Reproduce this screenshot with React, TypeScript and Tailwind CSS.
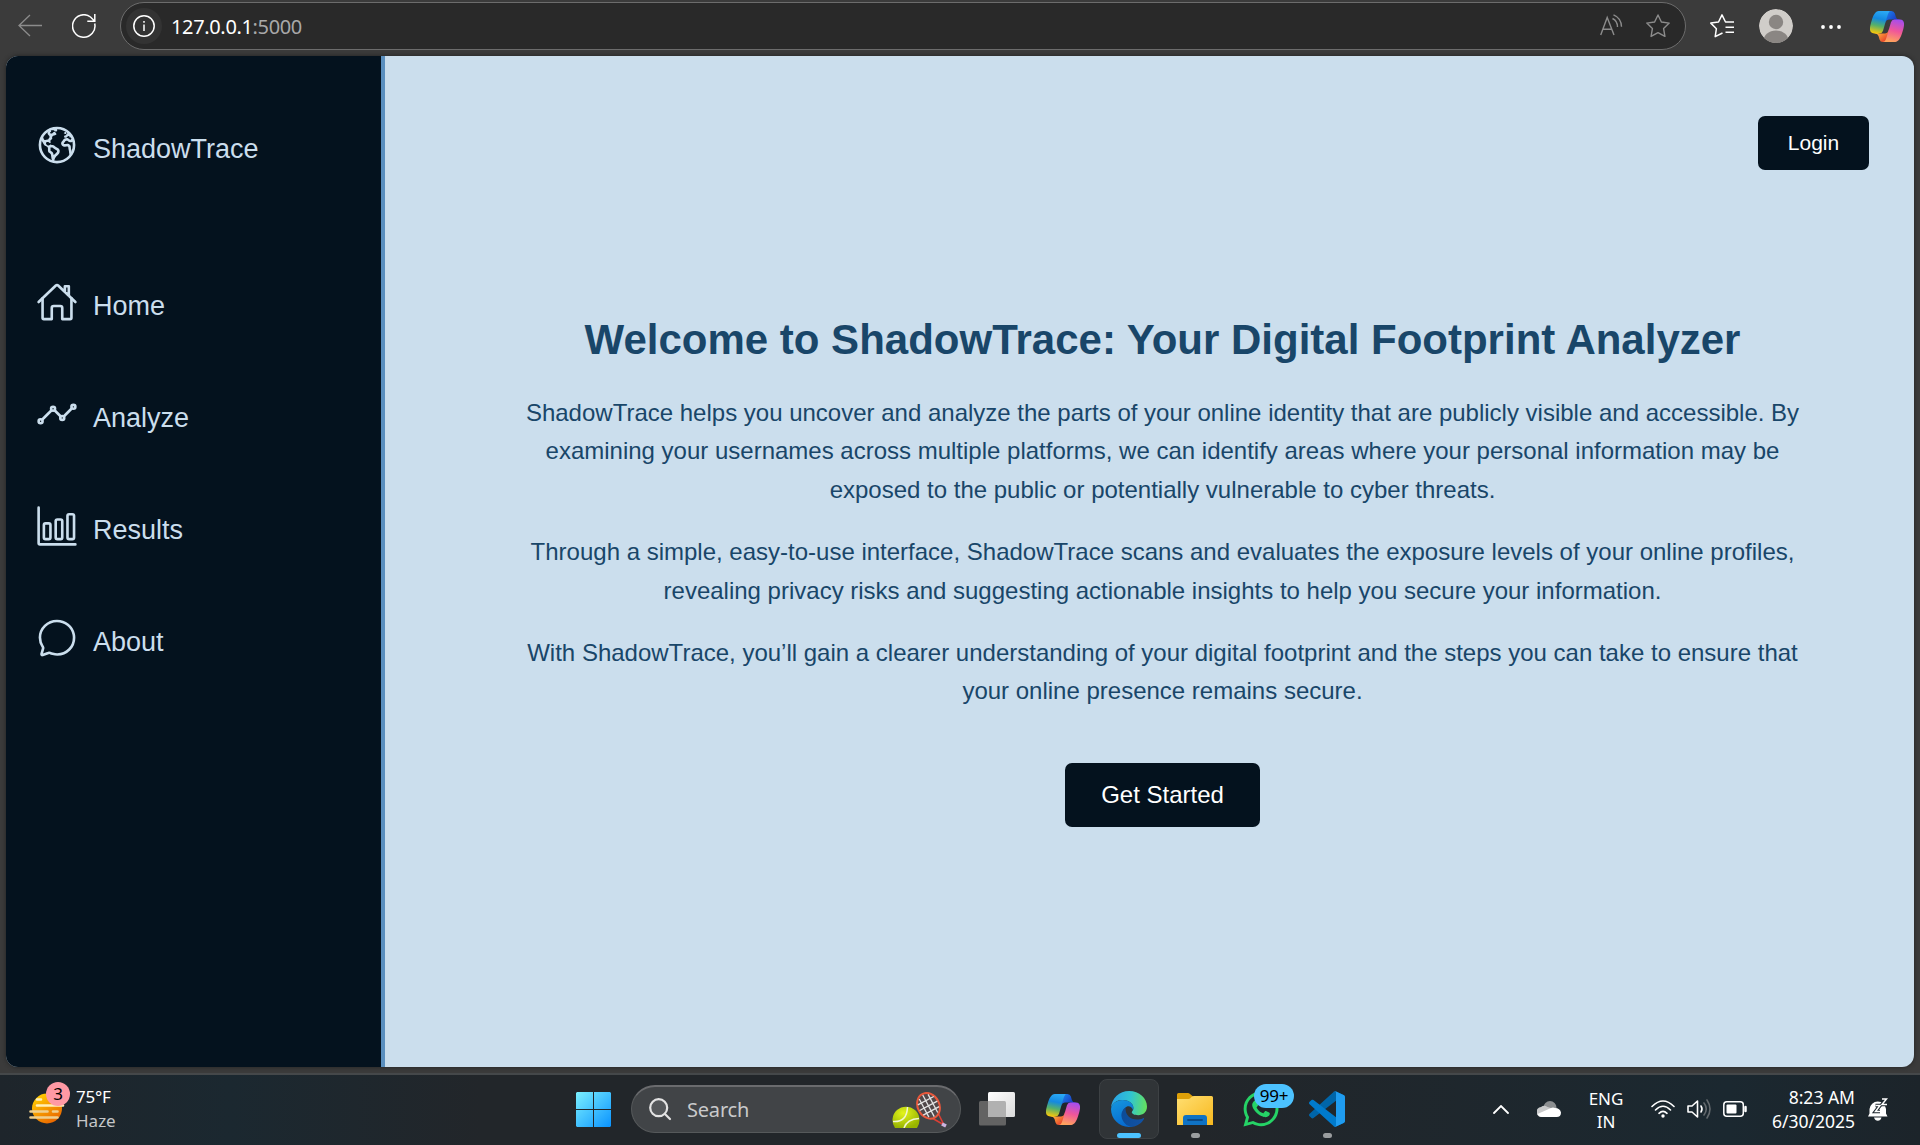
import { useId, type ReactNode } from "react";
import {
  IoEarthOutline,
  IoHomeOutline,
  IoAnalyticsOutline,
  IoBarChartOutline,
  IoChatbubbleOutline,
} from "react-icons/io5";
import { FaWhatsapp } from "react-icons/fa";

function CopilotLogo({ className }: { className: string }) {
  const id = useId();
  return (
    <svg viewBox="2.5 4 43 40" className={className} fill="none">
      <defs>
        <linearGradient id={id + "a"} x1="16" y1="4" x2="10" y2="33" gradientUnits="userSpaceOnUse">
          <stop offset="0" stopColor="#2aa8f5" />
          <stop offset=".35" stopColor="#1489e0" />
          <stop offset=".65" stopColor="#55b06a" />
          <stop offset="1" stopColor="#f8c80a" />
        </linearGradient>
        <linearGradient id={id + "b"} x1="38" y1="15" x2="30" y2="44" gradientUnits="userSpaceOnUse">
          <stop offset="0" stopColor="#a44df0" />
          <stop offset=".5" stopColor="#f0569a" />
          <stop offset="1" stopColor="#ffa45c" />
        </linearGradient>
        <linearGradient id={id + "c"} x1="24" y1="6" x2="35" y2="15" gradientUnits="userSpaceOnUse">
          <stop offset="0" stopColor="#1b7ce8" />
          <stop offset="1" stopColor="#1a3fc4" />
        </linearGradient>
        <linearGradient id={id + "d"} x1="12" y1="33" x2="21" y2="43" gradientUnits="userSpaceOnUse">
          <stop offset="0" stopColor="#ffab3c" />
          <stop offset="1" stopColor="#e8452c" />
        </linearGradient>
      </defs>
      <path d="M34.142 7.325A4.63 4.63 0 0 0 29.7 4h-1.35a4.63 4.63 0 0 0-4.554 3.794L21.48 20.407l.575-1.965a4.63 4.63 0 0 1 4.444-3.33h7.853l3.294 1.282 3.175-1.283h-.926a4.63 4.63 0 0 1-4.443-3.325z" fill={"url(#" + id + "c)"} />
      <path d="M14.33 40.656A4.63 4.63 0 0 0 18.779 44h2.87a4.63 4.63 0 0 0 4.629-4.51l.312-12.163-.654 2.233a4.63 4.63 0 0 1-4.443 3.329h-7.919l-2.823-1.532-3.057 1.532h.912a4.63 4.63 0 0 1 4.447 3.344z" fill={"url(#" + id + "d)"} />
      <path d="M29.5 4H13.46c-4.583 0-7.332 6.057-9.165 12.113C2.123 23.29-.72 32.885 7.503 32.885h6.925a4.63 4.63 0 0 0 4.456-3.358 2078 2078 0 0 1 4.971-17.156c.843-2.843 1.544-5.284 2.621-6.805C27.08 4.713 28.086 4 29.5 4" fill={"url(#" + id + "a)"} />
      <path d="M18.498 44h16.04c4.582 0 7.332-6.058 9.165-12.115 2.171-7.177 5.013-16.775-3.208-16.775h-6.926a4.63 4.63 0 0 0-4.455 3.358 2084 2084 0 0 1-4.972 17.16c-.842 2.844-1.544 5.285-2.62 6.806-.604.852-1.61 1.566-3.024 1.566" fill={"url(#" + id + "b)"} />
    </svg>
  );
}

function EdgeLogo() {
  return (
    <svg viewBox="0 0 36 36" className="size-9">
      <defs>
        <linearGradient id="edgeTop" x1="2" y1="12" x2="36" y2="16" gradientUnits="userSpaceOnUse">
          <stop offset="0" stopColor="#2aa6e6" />
          <stop offset=".5" stopColor="#31c5d0" />
          <stop offset="1" stopColor="#66e25a" />
        </linearGradient>
        <linearGradient id="edgeLeft" x1="4" y1="12" x2="16" y2="36" gradientUnits="userSpaceOnUse">
          <stop offset="0" stopColor="#1391dc" />
          <stop offset="1" stopColor="#0668cf" />
        </linearGradient>
        <linearGradient id="edgeDark" x1="12" y1="24" x2="32" y2="28" gradientUnits="userSpaceOnUse">
          <stop offset="0" stopColor="#0d4c98" />
          <stop offset="1" stopColor="#1152a4" />
        </linearGradient>
      </defs>
      <path d="M0 17C.6 7 8.5 0 18 0c10.500 0 18 7.500 18 15.500 0 5.500-4 8.700-8.800 8.700-4 0-6.400-1.400-6.400-2.900 0-1 1.600-1.500 1.600-4.300C22.400 12.500 17.500 9 11.500 9 5.500 9 1.500 12.500 0 17z" fill="url(#edgeTop)" />
      <path d="M0 18C.8 12.500 5.500 9 11.500 9c6 0 10.900 3.500 10.900 8 0 .8-.2 1.500-.4 2C21 16 18.500 14.500 16 15.500c-3 1.500-5 5-4.500 9 .6 5 4.500 9.500 10.500 11C10 38 0 29 0 18z" fill="url(#edgeLeft)" />
      <path d="M14.500 16.500c-2.500 1.700-4.500 5-4 9C11.200 31 16 36 21.500 35.700c5-.5 9.500-4 11.500-7.700.3-.8-.3-1.200-1-.8-2 1-4 1.400-6 1.400-7 0-12-5-11.500-12.100z" fill="url(#edgeDark)" />
    </svg>
  );
}

function VsCodeLogo() {
  return (
    <svg viewBox="0 0 36 36" className="size-9">
      <path d="M26.500 .3 34.500 4c1 .4 1.500 1.300 1.500 2.300L27 9.800 4.500 27c-.7.500-1.400.5-2 0L.6 25.200c-.8-.7-.8-1.800 0-2.500L24.800.8c.5-.5 1.100-.7 1.700-.5z" fill="#0065a9" />
      <path d="M26.500 35.700 34.500 32c1-.4 1.500-1.300 1.500-2.300L27 26.200 4.500 9c-.7-.5-1.400-.5-2 0L.6 10.800c-.8.700-.8 1.800 0 2.500L24.800 35.200c.5.500 1.100.7 1.700.5z" fill="#007acc" />
      <path d="M26.500 35.700c-.7.300-1.400.1-1.900-.5.900.9 2.400.3 2.400-1V1.800c0-1.300-1.500-1.900-2.400-1 .5-.6 1.200-.8 1.900-.5L34.600 4.100c.9.400 1.400 1.200 1.400 2.200v23.400c0 1-.5 1.800-1.400 2.200z" fill="#1f9cf0" />
    </svg>
  );
}

function NavItem({ icon, label }: { icon: ReactNode; label: string }) {
  return (
    <a className="flex h-28 items-center pl-[30px]">
      <span className="-mt-1.5 text-[42px]">{icon}</span>
      <span className="mt-px ml-[15px] text-[27px] leading-8">{label}</span>
    </a>
  );
}

function Toolbar() {
  return (
    <header className="flex h-14 shrink-0 items-start pt-0.5 font-['Noto_Sans',sans-serif]">
      <div className="flex h-12 w-[120px] items-center pl-[18px]">
        <svg viewBox="0 0 24 24" className="size-6" fill="none" stroke="#8c8c8c" strokeWidth="1.3">
          <path d="M24 11.500H1M12 1 1 11.500 12 22" />
        </svg>
        <svg viewBox="0 0 24 24" className="ml-[30px] size-6" fill="none" stroke="#fff" strokeWidth="1.5">
          <path d="M22.700 9.500A11.200 11.200 0 1 1 18.500 3L22.500 7M22.800 0v7.200h-7.500" />
        </svg>
      </div>
      <div className="flex h-12 w-[1566px] items-center rounded-full border border-[#6c6c6c] bg-[#292929] px-[5px]">
        <span className="grid size-9 place-items-center rounded-full bg-[#333]">
          <svg viewBox="0 0 22 22" className="size-[22px]" fill="none" stroke="#fff" strokeWidth="1.5">
            <circle cx="11" cy="11" r="10.2" />
            <path d="M11 9.500V16M11 6v1.800" />
          </svg>
        </span>
        <span className="mt-0.5 ml-[9px] text-[20px] tracking-[-0.35px] text-white">
          127.0.0.1<span className="text-[#a8a8a8]">:5000</span>
        </span>
        <svg viewBox="0 0 24 24" className="ml-auto size-6" fill="none" stroke="#8c8c8c" strokeWidth="1.4">
          <path d="M.700 21 7.200 3.500 14 21M3 15.200h8.700M12.500 4.500q5 2.500 5 8.500M13.500 .800q7.800 3.200 8 12" />
        </svg>
        <svg viewBox="0 0 24 24" className="mr-[10px] ml-[22px] size-6" fill="none" stroke="#8c8c8c" strokeWidth="1.4" strokeLinejoin="round">
          <path d="m12 1 3.400 7 7.800 1.100-5.600 5.500 1.300 7.800-6.900-3.700-6.900 3.700 1.300-7.800L.8 9.100 8.600 8z" />
        </svg>
      </div>
      <div className="flex h-12 items-center">
        <svg viewBox="0 0 24 24" className="ml-6 size-6" fill="none" stroke="#fff" strokeWidth="1.5" strokeLinejoin="round">
          <path d="M12.500 19 5.200 22.600l1.200-7.900L.8 9.100 8.500 8 12 .9 15.500 8H24M15.500 13.300H24M15.500 18.300H24" />
        </svg>
        <svg viewBox="0 0 34 34" className="ml-[25px] size-[34px]">
          <clipPath id="avatar"><circle cx="17" cy="17" r="17" /></clipPath>
          <g clipPath="url(#avatar)">
            <circle cx="17" cy="17" r="17" fill="#d0cdc9" />
            <circle cx="17" cy="13" r="7.2" fill="#8a8683" />
            <ellipse cx="17" cy="32" rx="12.5" ry="10.5" fill="#8a8683" />
          </g>
        </svg>
        <svg viewBox="0 0 20 4" className="mt-0.5 ml-7 h-1 w-5" fill="#fff">
          <circle cx="2" cy="2" r="1.9" /><circle cx="10" cy="2" r="1.9" /><circle cx="18" cy="2" r="1.9" />
        </svg>
        <CopilotLogo className="ml-[29px] h-[31px] w-[34px]" />
      </div>
    </header>
  );
}

function Taskbar() {
  return (
    <footer className="flex h-[72px] shrink-0 items-center border-t-2 border-[#45484a] bg-[linear-gradient(90deg,#1e252b_0%,#1b2830_12%,#22262a_25%,#22262a_62%,#1b2830_90%,#1c242a_100%)] pb-0.5 font-['Noto_Sans',sans-serif]">
      <div className="flex w-[576px] items-center pl-[29px]">
        <div className="relative size-9">
          <svg viewBox="0 0 36 36" className="size-9" strokeLinecap="round">
            <defs>
              <linearGradient id="sun" x1="8" y1="6" x2="26" y2="34" gradientUnits="userSpaceOnUse">
                <stop offset="0" stopColor="#ffc800" /><stop offset="1" stopColor="#e85d00" />
              </linearGradient>
            </defs>
            <circle cx="18" cy="17.5" r="15" fill="url(#sun)" />
            <path d="M8 8.500h4M8 14.500h26" stroke="#fff0b8" strokeWidth="2.6" />
            <path d="M1.500 20.500h17M24 20.500h4.500M1.500 26.500h27" stroke="#efcf8e" strokeWidth="2.6" />
          </svg>
          <span className="absolute -top-[9px] left-[17px] grid size-6 place-items-center rounded-full bg-[#ff99a4] text-[17px] leading-6 text-black">3</span>
        </div>
        <div className="-mt-px ml-[11px] text-[17px] leading-6 tracking-[-0.2px]">
          <p className="text-white">75°F</p>
          <p className="tracking-normal text-[#c4c6c8]">Haze</p>
        </div>
      </div>
      <svg viewBox="0 0 35 35" className="size-[35px]">
        <defs>
          <linearGradient id="win" x1="0" y1="0" x2="35" y2="35" gradientUnits="userSpaceOnUse">
            <stop offset="0" stopColor="#7bf0ff" /><stop offset="1" stopColor="#0a93ff" />
          </linearGradient>
        </defs>
        <path d="M1 0h16v17H0V1zM18 0h16l1 1v16H18zM0 18h17v17H1l-1-1zM18 18h17v16l-1 1H18z" fill="url(#win)" />
      </svg>
      <div className="ml-5 flex h-12 w-[330px] items-center rounded-full border border-t-2 border-[#56595b] border-t-[#6a6b6e] bg-[#414447] pl-[17px]">
        <svg viewBox="0 0 23 23" className="size-[23px]" fill="#55585b" stroke="#e3e3e3" strokeWidth="2.2" strokeLinecap="round">
          <circle cx="9.7" cy="9.7" r="8.5" /><path d="m16 16 5 5" />
        </svg>
        <span className="ml-[15px] text-[20px] tracking-[-0.2px] text-[#c9cacb]">Search</span>
        <svg viewBox="0 0 56 36" className="mr-3 ml-auto h-9 w-14">
          <defs>
            <radialGradient id="ball" cx=".4" cy=".3" r=".7">
              <stop offset="0" stopColor="#e3f41c" /><stop offset="1" stopColor="#98b400" />
            </radialGradient>
          </defs>
          <path d="M3 36A13.500 13.500 0 1 1 25 36z" fill="url(#ball)" />
          <path d="M1 29.500q14 1 14.500-14.500M12 36q3-9 15-9.500" fill="none" stroke="#f2f6d0" strokeWidth="1.5" />
          <path d="m40 26 12 7-6-12" fill="none" stroke="#dc3f35" strokeWidth="1.6" />
          <path d="m50 32 4 2" stroke="#c9b4e0" strokeWidth="3.5" />
          <g transform="rotate(-28 36.500 13.800)">
            <ellipse cx="36.5" cy="13.8" rx="10.8" ry="13.3" fill="#50484a" stroke="#e8583c" strokeWidth="2" />
            <path d="M27.500 8h18M26.500 13.800h20M27.500 19.500h18M31.500 3.500v20.500M36.500 1.500v24.500M41.500 3.500v20.500" stroke="#e4e4e4" strokeWidth="1.3" />
          </g>
        </svg>
      </div>
      <svg viewBox="0 0 36 34" className="ml-[18px] h-[34px] w-9">
        <defs>
          <linearGradient id="tv" x1="0" y1="0" x2="1" y2="1">
            <stop offset="0" stopColor="#fff" /><stop offset="1" stopColor="#dadada" />
          </linearGradient>
        </defs>
        <rect x="0" y="9" width="27" height="24.5" rx="1.5" fill="#636363" />
        <rect x="9" y="0" width="27" height="25" rx="1.5" fill="url(#tv)" />
        <path d="M9 9h16.500q1.500 0 1.500 1.500V25H10.500Q9 25 9 23.500z" fill="#b1b1b1" />
      </svg>
      <CopilotLogo className="ml-[31px] h-[31px] w-[34px]" />
      <div className="relative ml-[19px] grid size-[60px] place-items-center rounded-lg border border-[#3d4144] bg-[#303437]">
        <EdgeLogo />
        <span className="absolute bottom-0 left-[17px] h-[5px] w-6 rounded-full bg-[#4cc2ff]" />
      </div>
      <div className="relative ml-[18px] size-9">
        <svg viewBox="0 0 36 36" className="size-9">
          <defs>
            <linearGradient id="folder" x1="0" y1="0" x2="1" y2="1">
              <stop offset="0" stopColor="#ffdf72" /><stop offset="1" stopColor="#f8b81e" />
            </linearGradient>
          </defs>
          <path d="M0 3.500Q0 2 1.500 2H11q1 0 2 1l3 2.500V14H0z" fill="#dfa008" />
          <path d="M0 8h11.500q1 0 2-1l1-1Q15.500 5 17 5h17.500Q36 5 36 6.500V34H0z" fill="url(#folder)" />
          <path d="M6 34v-7q0-3 3-3h18q3 0 3 3v7z" fill="#0f72c4" />
          <path d="M11 29h14" stroke="#0b4a87" strokeWidth="1.8" strokeLinecap="round" />
        </svg>
        <span className="absolute -bottom-[11px] left-[14px] h-[5px] w-[9px] rounded-full bg-[#9a9d9f]" />
      </div>
      <div className="relative ml-[30px] h-9 w-9 text-[#25d366]">
        <FaWhatsapp className="-ml-0.5 size-10 -translate-y-0.5" />
        <span className="absolute -top-[7px] left-[11px] grid h-6 w-10 place-items-center rounded-full bg-[#4cc2ff] text-[17px] leading-6 tracking-[-0.3px] text-black">99+</span>
      </div>
      <div className="relative ml-[30px] size-9">
        <VsCodeLogo />
        <span className="absolute -bottom-[11px] left-[14px] h-[5px] w-[9px] rounded-full bg-[#9a9d9f]" />
      </div>
      <div className="ml-auto flex items-center pr-8 text-white">
        <svg viewBox="0 0 16 9" className="h-[9px] w-4" fill="none" stroke="#fff" strokeWidth="1.8" strokeLinecap="round">
          <path d="m1 8 7-7 7 7" />
        </svg>
        <svg viewBox="0 0 24 16" className="ml-7 h-4 w-6">
          <circle cx="13" cy="6.5" r="6.5" fill="#8c8f91" />
          <path d="M5 16a5 5 0 0 1-1-10q3-2.500 6.500 0L19 8.500a4 4 0 0 1 0 7.500z" fill="#c8c9ca" />
          <path d="M5 16q-3 0-4.500-3L14 7q2-1 4 0 5 0 6 4.500 0 4.500-4.500 4.500z" fill="#fff" />
        </svg>
        <div className="mt-0.5 ml-7 flex w-[34px] flex-col items-center text-[17px] leading-[23px]">
          <p>ENG</p><p>IN</p>
        </div>
        <svg viewBox="0 0 24 18" className="ml-7 h-[18px] w-6" fill="none" stroke="#fff" strokeWidth="1.6" strokeLinecap="round">
          <path d="M1 6.500Q12-4.500 23 6.500M4.500 10q7.500-7.500 15 0M8 13.300q4-3.800 8 0" />
          <circle cx="12" cy="16" r="1.7" fill="#fff" stroke="none" />
        </svg>
        <svg viewBox="0 0 24 20" className="ml-3 h-5 w-6" fill="none" stroke="#fff" strokeWidth="1.6" strokeLinejoin="round" strokeLinecap="round">
          <path d="M1 7h4l5.500-5v16L5 13H1zM14 7q2 3 0 6" />
          <path d="M17 4q4.500 6 0 12M20 1q6 9 0 18" stroke="#63696d" />
        </svg>
        <svg viewBox="0 0 24 16" className="ml-3 h-4 w-6" fill="none" stroke="#fff" strokeWidth="1.5">
          <rect x=".8" y=".8" width="19.5" height="14.4" rx="3" />
          <rect x="3.5" y="3.5" width="10" height="9" rx="1" fill="#fff" stroke="none" />
          <path d="M22.500 6v4" strokeWidth="2.5" strokeLinecap="round" />
        </svg>
        <div className="-mt-px ml-[25px] w-[83px] text-right text-[17.5px] leading-6 whitespace-nowrap">
          <p>8:23 AM</p><p>6/30/2025</p>
        </div>
        <svg viewBox="0 0 20 24" className="ml-[13px] h-6 w-5">
          <path d="M1.500 12a8.300 8.300 0 0 1 16.500 0v4.500l1.500 3H0l1.500-3zM6 20.500h7.500q-1 3.200-3.700 3.200T6 20.500z" fill="#fff" />
          <path d="M7.500 8.500h4.500l-4.500 6h4.500" fill="#fff" stroke="#1c262d" strokeWidth="3.600" />
          <path d="M14 2h4.500l-4.500 5.500h5" fill="none" stroke="#1c262d" strokeWidth="3.600" />
          <path d="M7.500 8.500h4.500l-4.500 6h4.500M14 2h4.500l-4.500 5.500h5" fill="none" stroke="#fff" strokeWidth="1.500" />
        </svg>
      </div>
    </footer>
  );
}

export default function App() {
  return (
    <div className="flex h-[1145px] w-[1920px] flex-col overflow-hidden bg-[#3b3b3b]">
      <Toolbar />
      <div className="mx-1.5 mb-1.5 flex h-[1011px] shrink-0 overflow-hidden rounded-xl bg-[#cbdeed] font-['Liberation_Sans',Arial,sans-serif] shadow-[0_0_4px_#222]">
        <nav className="w-[379px] shrink-0 border-r-4 border-[#5a8fbf] bg-[#04121e] pt-9 text-[#cbdeed]">
          <NavItem icon={<IoEarthOutline />} label="ShadowTrace" />
          <div className="mt-[45px]">
            <NavItem icon={<IoHomeOutline />} label="Home" />
            <NavItem icon={<IoAnalyticsOutline />} label="Analyze" />
            <NavItem icon={<IoBarChartOutline />} label="Results" />
            <NavItem icon={<IoChatbubbleOutline />} label="About" />
          </div>
        </nav>
        <main className="flex grow flex-col pt-[60px] text-[#194669]">
          <button className="mr-[45px] grid h-[54px] w-[111px] place-items-center self-end rounded-[7px] bg-[#04121e] text-[21px] text-white">
            Login
          </button>
          <section className="ml-[26px] flex flex-col items-center pt-[145px] text-center whitespace-nowrap">
            <h1 className="text-[42px] leading-[50px] font-bold">Welcome to ShadowTrace: Your Digital Footprint Analyzer</h1>
            <div className="mt-[29px] space-y-6 text-2xl leading-[38.4px]">
              <p>
                ShadowTrace helps you uncover and analyze the parts of your online identity that are publicly visible and accessible. By<br />
                examining your usernames across multiple platforms, we can identify areas where your personal information may be<br />
                exposed to the public or potentially vulnerable to cyber threats.
              </p>
              <p>
                Through a simple, easy-to-use interface, ShadowTrace scans and evaluates the exposure levels of your online profiles,<br />
                revealing privacy risks and suggesting actionable insights to help you secure your information.
              </p>
              <p>
                With ShadowTrace, you’ll gain a clearer understanding of your digital footprint and the steps you can take to ensure that<br />
                your online presence remains secure.
              </p>
            </div>
            <button className="mt-[52px] h-16 w-[195px] rounded-[7px] bg-[#04121e] text-2xl text-white">Get Started</button>
          </section>
        </main>
      </div>
      <Taskbar />
    </div>
  );
}
